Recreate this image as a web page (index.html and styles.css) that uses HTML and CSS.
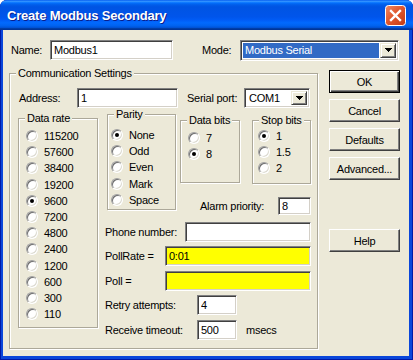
FILE: index.html
```html
<!DOCTYPE html>
<html lang="en">
<head>
    <meta charset="UTF-8">
    <title>Create Modbus Secondary</title>
    <link rel="stylesheet" href="styles.css">
</head>
<body>
    <div class="window">
        <div class="titlebar">
            <span class="title">Create Modbus Secondary</span>
            <span class="close">
                <svg width="21" height="21" viewBox="0 0 21 21">
                    <defs>
                        <linearGradient id="cg" x1="0" y1="0" x2="1" y2="1">
                            <stop offset="0" stop-color="#F08A66"/>
                            <stop offset="0.45" stop-color="#E0582E"/>
                            <stop offset="1" stop-color="#C23A14"/>
                        </linearGradient>
                    </defs>
                    <rect x="0.5" y="0.5" width="20" height="20" rx="3" fill="url(#cg)" stroke="#fff"/>
                    <path d="M6 6L15 15M15 6L6 15" stroke="#fff" stroke-width="2.4" stroke-linecap="square"/>
                </svg>
            </span>
        </div>

        <div class="client">
            <div class="top-row">
                <label class="lbl lbl-name">Name:</label>
                <input class="edit name-edit" type="text" value="Modbus1">
                <label class="lbl lbl-mode">Mode:</label>
                <div class="combo mode-combo">
                    <span class="combo-text selected">Modbus Serial</span>
                    <span class="combo-btn"><svg width="7" height="4"><path d="M0 0H7V1H6V2H5V3H4V4H3V3H2V2H1V1H0Z"/></svg></span>
                </div>
            </div>

            <div class="main-row">
                <fieldset class="group comm">
                    <legend>Communication Settings</legend>
                    <div class="addr-row">
                        <label class="lbl lbl-addr">Address:</label>
                        <input class="edit addr-edit" type="text" value="1">
                        <label class="lbl lbl-port">Serial port:</label>
                        <div class="combo port-combo">
                            <span class="combo-text">COM1</span>
                            <span class="combo-btn"><svg width="7" height="4"><path d="M0 0H7V1H6V2H5V3H4V4H3V3H2V2H1V1H0Z"/></svg></span>
                        </div>
                    </div>

                    <div class="settings">
                        <fieldset class="group rate">
                            <legend>Data rate</legend>
                            <div class="radios rate-list">
                                <div class="opt"><span class="radio"></span>115200</div>
                                <div class="opt"><span class="radio"></span>57600</div>
                                <div class="opt"><span class="radio"></span>38400</div>
                                <div class="opt"><span class="radio"></span>19200</div>
                                <div class="opt"><span class="radio on"></span>9600</div>
                                <div class="opt"><span class="radio"></span>7200</div>
                                <div class="opt"><span class="radio"></span>4800</div>
                                <div class="opt"><span class="radio"></span>2400</div>
                                <div class="opt"><span class="radio"></span>1200</div>
                                <div class="opt"><span class="radio"></span>600</div>
                                <div class="opt"><span class="radio"></span>300</div>
                                <div class="opt"><span class="radio"></span>110</div>
                            </div>
                        </fieldset>

                        <div class="right-col">
                            <div class="opts">
                                <fieldset class="group parity">
                                    <legend>Parity</legend>
                                    <div class="radios parity-list">
                                        <div class="opt"><span class="radio on"></span>None</div>
                                        <div class="opt"><span class="radio"></span>Odd</div>
                                        <div class="opt"><span class="radio"></span>Even</div>
                                        <div class="opt"><span class="radio"></span>Mark</div>
                                        <div class="opt"><span class="radio"></span>Space</div>
                                    </div>
                                </fieldset>
                                <div class="bits-col">
                                    <div class="bits-row">
                                        <fieldset class="group databits">
                                            <legend>Data bits</legend>
                                            <div class="radios databits-list">
                                                <div class="opt"><span class="radio"></span>7</div>
                                                <div class="opt"><span class="radio on"></span>8</div>
                                            </div>
                                        </fieldset>
                                        <fieldset class="group stopbits">
                                            <legend>Stop bits</legend>
                                            <div class="radios stopbits-list">
                                                <div class="opt"><span class="radio on"></span>1</div>
                                                <div class="opt"><span class="radio"></span>1.5</div>
                                                <div class="opt"><span class="radio"></span>2</div>
                                            </div>
                                        </fieldset>
                                    </div>
                                    <div class="alarm-row">
                                        <label class="lbl lbl-alarm">Alarm priority:</label>
                                        <input class="edit alarm-edit" type="text" value="8">
                                    </div>
                                </div>
                            </div>

                            <div class="field-row first">
                                <label class="lbl lbl-phone">Phone number:</label>
                                <input class="edit phone-edit" type="text" value="">
                            </div>
                            <div class="field-row">
                                <label class="lbl lbl-poll">PollRate =</label>
                                <input class="edit poll-edit yellow" type="text" value="0:01">
                            </div>
                            <div class="field-row">
                                <label class="lbl lbl-poll">Poll =</label>
                                <input class="edit poll-edit yellow" type="text" value="">
                            </div>
                            <div class="field-row">
                                <label class="lbl lbl-retry">Retry attempts:</label>
                                <input class="edit small-edit" type="text" value="4">
                            </div>
                            <div class="field-row">
                                <label class="lbl lbl-retry">Receive timeout:</label>
                                <input class="edit small-edit" type="text" value="500">
                                <span class="unit">msecs</span>
                            </div>
                        </div>
                    </div>
                </fieldset>

                <div class="buttons">
                    <button class="btn default">OK</button>
                    <button class="btn">Cancel</button>
                    <button class="btn">Defaults</button>
                    <button class="btn">Advanced...</button>
                    <button class="btn help">Help</button>
                </div>
            </div>
        </div>
    </div>
</body>
</html>
```

FILE: styles.css
```css
body {
    margin: 0;
    background: #fff;
    font-family: 'Liberation Sans', Arial, sans-serif;
    font-size: 11px;
    letter-spacing: -0.25px;
    color: #000;
}
.window {
    width: 413px;
    height: 360px;
    display: flex;
    flex-direction: column;
    background: #0A46DA;
    border-radius: 7px 7px 0 0;
    box-shadow: inset 1px 0 0 #0019A6, inset -1px 0 0 #0019A6, inset 0 -1px 0 #0019A6;
}
.titlebar {
    height: 30px;
    display: flex;
    align-items: center;
    padding: 0 7px 0 7px;
    border-radius: 7px 7px 0 0;
    background: linear-gradient(to bottom, #0058EE 0%, #3593FF 4%, #288EFF 6%, #127DFF 8%, #036FFC 10%, #0262EE 14%, #0057E5 20%, #0054E3 24%, #0055EB 56%, #005BF5 66%, #026AFE 76%, #0062EF 86%, #0052D6 92%, #0040AB 94%, #003092 100%);
}
.title {
    flex: 1;
    color: #fff;
    font-weight: bold;
    font-size: 13px;
    letter-spacing: -0.2px;
    text-shadow: 1px 1px 0 #0A1E8C;
    padding-top: 1px;
}
.close {
    width: 21px;
    height: 21px;
    display: block;
}
.close svg {
    display: block;
}
.client {
    flex: 1;
    margin: 0 4px 4px 3px;
    padding: 9px 0 0 6px;
    background: #ECE9D8;
}

/* controls */
.lbl {
    display: block;
    white-space: nowrap;
}
.edit {
    box-sizing: border-box;
    height: 20px;
    margin: 0;
    padding: 0 3px;
    border: 1px solid;
    border-color: #808080 #fff #fff #808080;
    box-shadow: inset 1px 1px 0 #404040, inset -1px -1px 0 #D4D0C8;
    background: #fff;
    font: inherit;
    letter-spacing: inherit;
    color: #000;
    outline: none;
}
.edit.yellow {
    background: #FFFF00;
}
.combo {
    box-sizing: border-box;
    display: flex;
    padding: 2px;
    border: 1px solid;
    border-color: #808080 #fff #fff #808080;
    box-shadow: inset 1px 1px 0 #404040, inset -1px -1px 0 #D4D0C8;
    background: #fff;
}
.combo-text {
    flex: 1;
    display: flex;
    align-items: center;
    padding-left: 2px;
    margin-right: 1px;
}
.combo-text.selected {
    background: #316AC5;
    color: #fff;
}
.combo-btn {
    box-sizing: border-box;
    width: 16px;
    display: flex;
    align-items: center;
    justify-content: center;
    background: #ECE9D8;
    border: 1px solid;
    border-color: #ECE9D8 #404040 #404040 #ECE9D8;
    box-shadow: inset 1px 1px 0 #fff, inset -1px -1px 0 #808080;
}
.combo-btn svg {
    display: block;
}
.btn {
    box-sizing: border-box;
    width: 71px;
    height: 23px;
    margin: 0;
    padding: 0;
    background: #ECE9D8;
    border: 1px solid;
    border-color: #fff #404040 #404040 #fff;
    box-shadow: inset -1px -1px 0 #808080;
    font: inherit;
    letter-spacing: inherit;
    color: #000;
}
.btn.default {
    border-color: #000;
    box-shadow: inset 1px 1px 0 #fff, inset -1px -1px 0 #404040, inset -2px -2px 0 #808080;
}

/* group boxes */
.group {
    margin: 0;
    padding: 0;
    min-width: 0;
    box-sizing: border-box;
    border: 1px solid #ACA899;
    box-shadow: inset 1px 1px 0 #fff, 1px 1px 0 #fff;
}
.group legend {
    margin-left: 6px;
    padding: 0 2px;
    line-height: 13px;
    background: #ECE9D8;
}
.opt {
    height: 16.2px;
    display: flex;
    align-items: center;
    white-space: nowrap;
}
.radio {
    position: relative;
    box-sizing: border-box;
    width: 12px;
    height: 12px;
    margin-right: 6px;
    border-radius: 50%;
    border: 1px solid;
    border-color: #A0A0A0 #fff #fff #A0A0A0;
    background: #fff;
    box-shadow: inset 1px 1px 0 #6E6E6E, inset -1px -1px 0 #DCDAD0;
}
.radio.on::after {
    content: "";
    position: absolute;
    left: 3px;
    top: 3px;
    width: 4px;
    height: 4px;
    border-radius: 50%;
    background: #000;
}

/* layout */
.top-row {
    height: 22px;
    display: flex;
    align-items: center;
}
.lbl-name {
    width: 39px;
    margin-left: 2px;
}
.name-edit {
    width: 123px;
}
.lbl-mode {
    width: 38px;
    margin-left: 29px;
}
.mode-combo {
    width: 159px;
    height: 21px;
}
.main-row {
    display: flex;
    align-items: flex-start;
    margin-top: 6px;
}
.comm {
    width: 309px;
}
.buttons {
    display: flex;
    flex-direction: column;
    gap: 6px;
    margin-left: 11px;
    margin-top: 3px;
}
.btn.help {
    margin-top: 43px;
}
.addr-row {
    height: 20px;
    display: flex;
    align-items: center;
    margin-top: 8px;
    padding-left: 9px;
}
.lbl-addr {
    width: 58px;
}
.addr-edit {
    width: 101px;
}
.lbl-port {
    width: 57px;
    margin-left: 9px;
}
.port-combo {
    width: 66px;
    height: 20px;
}
.settings {
    display: flex;
    align-items: flex-start;
}
.rate {
    width: 80px;
    margin-left: 8px;
    margin-top: 4px;
}
.rate-list {
    padding: 3px 0 5px 7px;
}
.right-col {
    width: 206px;
    margin-left: 7px;
    padding-bottom: 8px;
}
.opts {
    display: flex;
    align-items: flex-start;
}
.parity {
    width: 69px;
    margin-left: 2px;
}
.parity-list {
    padding: 6px 0 1px 3px;
}
.bits-col {
    margin-left: 4px;
}
.bits-row {
    display: flex;
    align-items: flex-start;
    margin-top: 6px;
}
.databits {
    width: 60px;
}
.databits-list {
    padding: 3px 0 20px 7px;
}
.stopbits {
    width: 59px;
    margin-left: 12px;
}
.stopbits-list {
    padding: 1px 0 6px 5px;
}
.alarm-row {
    display: flex;
    align-items: center;
    margin-top: 13px;
    padding-left: 20px;
}
.lbl-alarm {
    width: 78px;
}
.alarm-edit {
    width: 33px;
    height: 18px;
}
.field-row {
    height: 20px;
    display: flex;
    align-items: center;
    margin-top: 4.5px;
}
.field-row.first {
    margin-top: 7px;
}
.lbl-phone {
    width: 80px;
}
.phone-edit {
    width: 126px;
}
.lbl-poll {
    width: 60px;
}
.poll-edit {
    width: 146px;
}
.lbl-retry {
    width: 92px;
}
.small-edit {
    width: 40px;
}
.unit {
    margin-left: 9px;
}
```
